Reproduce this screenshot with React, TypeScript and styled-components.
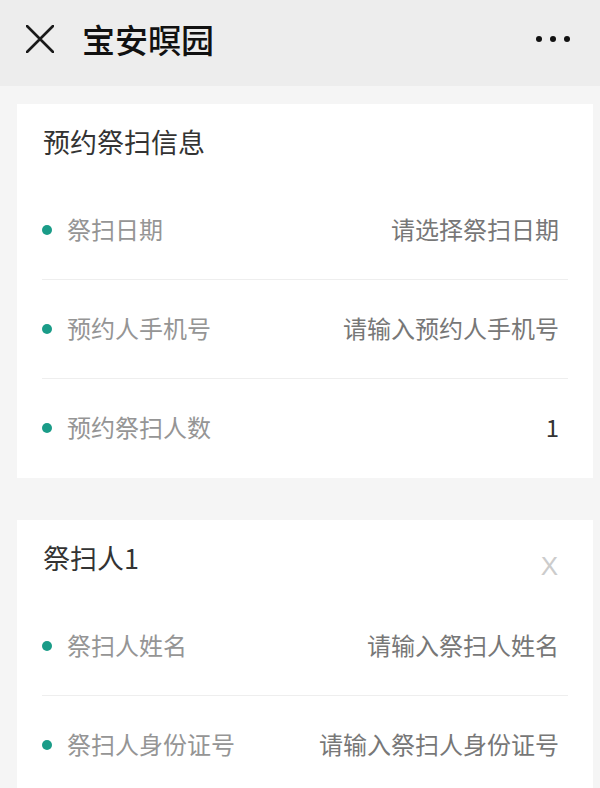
import React from 'react';
import styled, { createGlobalStyle } from 'styled-components';

const GlobalStyle = createGlobalStyle`
  * {
    box-sizing: border-box;
  }

  body {
    margin: 0;
    background: #f5f5f5;
    font-family: "Noto Sans CJK SC", "Noto Sans", sans-serif;
  }
`;

const Page = styled.div`
  height: 788px;
  overflow: hidden;
  background: #f5f5f5;
`;

const NavBar = styled.header`
  height: 86px;
  display: flex;
  align-items: center;
  padding: 0 30px 8px 26px;
  background: #ededed;
`;

const CloseButton = styled.button`
  width: 28px;
  height: 28px;
  padding: 0;
  border: none;
  background: none;
  display: flex;
  align-items: center;
  justify-content: center;
  cursor: pointer;
`;

const NavTitle = styled.h1`
  flex: 1;
  margin: 0 0 0 28px;
  font-size: 33px;
  font-weight: 500;
  color: #111;
  line-height: 1;
`;

const MoreButton = styled.div`
  display: flex;
  gap: 8px;
  align-items: center;
`;

const Dot = styled.span`
  width: 6px;
  height: 6px;
  border-radius: 50%;
  background: #111;
`;

const Card = styled.section<{ $top: number }>`
  margin: ${p => p.$top}px 7px 0 17px;
  background: #fff;
  padding: 0 25px;
`;

const CardHead = styled.div`
  height: 77px;
  display: flex;
  align-items: center;
  justify-content: space-between;
  padding: 0 10px 2px 1px;
`;

const CardTitle = styled.h2`
  margin: 0;
  font-size: 27px;
  font-weight: 400;
  color: #333;
`;

const RemoveButton = styled.span`
  padding-top: 18px;
  font-family: "Liberation Sans", Arial, sans-serif;
  font-size: 26px;
  color: #cccccc;
  cursor: pointer;
`;

const Row = styled.div`
  height: 99px;
  display: flex;
  align-items: center;
  justify-content: space-between;
  padding: 0 9px 4px 0;
  border-bottom: 1px solid #eeeeee;

  &:last-child {
    border-bottom: none;
  }
`;

const Label = styled.div`
  display: flex;
  align-items: center;
  gap: 15px;
  font-size: 24px;
  color: #959595;
`;

const Bullet = styled.span`
  width: 10px;
  height: 10px;
  margin-top: 3px;
  border-radius: 50%;
  background: #1a9c88;
`;

const Value = styled.div<{ $filled?: boolean }>`
  font-size: 24px;
  color: ${p => (p.$filled ? '#333' : '#777')};
`;

type Field = { label: string; value: string; filled?: boolean };

const bookingFields: Field[] = [
  { label: '祭扫日期', value: '请选择祭扫日期' },
  { label: '预约人手机号', value: '请输入预约人手机号' },
  { label: '预约祭扫人数', value: '1', filled: true },
];

const visitorFields: Field[] = [
  { label: '祭扫人姓名', value: '请输入祭扫人姓名' },
  { label: '祭扫人身份证号', value: '请输入祭扫人身份证号' },
];

const FieldRow: React.FC<Field> = ({ label, value, filled }) => (
  <Row>
    <Label>
      <Bullet />
      {label}
    </Label>
    <Value $filled={filled}>{value}</Value>
  </Row>
);

const App: React.FC = () => {
  return (
    <Page>
      <GlobalStyle />
      <NavBar>
        <CloseButton aria-label="关闭">
          <svg width="28" height="28" viewBox="0 0 28 28">
            <path d="M1 1 L27 27 M27 1 L1 27" stroke="#1a1a1a" strokeWidth="2.6" strokeLinecap="round" />
          </svg>
        </CloseButton>
        <NavTitle>宝安暝园</NavTitle>
        <MoreButton>
          <Dot />
          <Dot />
          <Dot />
        </MoreButton>
      </NavBar>

      <Card $top={18}>
        <CardHead>
          <CardTitle>预约祭扫信息</CardTitle>
        </CardHead>
        {bookingFields.map(f => (
          <FieldRow key={f.label} {...f} />
        ))}
      </Card>

      <Card $top={42}>
        <CardHead>
          <CardTitle>祭扫人1</CardTitle>
          <RemoveButton>X</RemoveButton>
        </CardHead>
        {visitorFields.map(f => (
          <FieldRow key={f.label} {...f} />
        ))}
      </Card>
    </Page>
  );
};

export default App;
